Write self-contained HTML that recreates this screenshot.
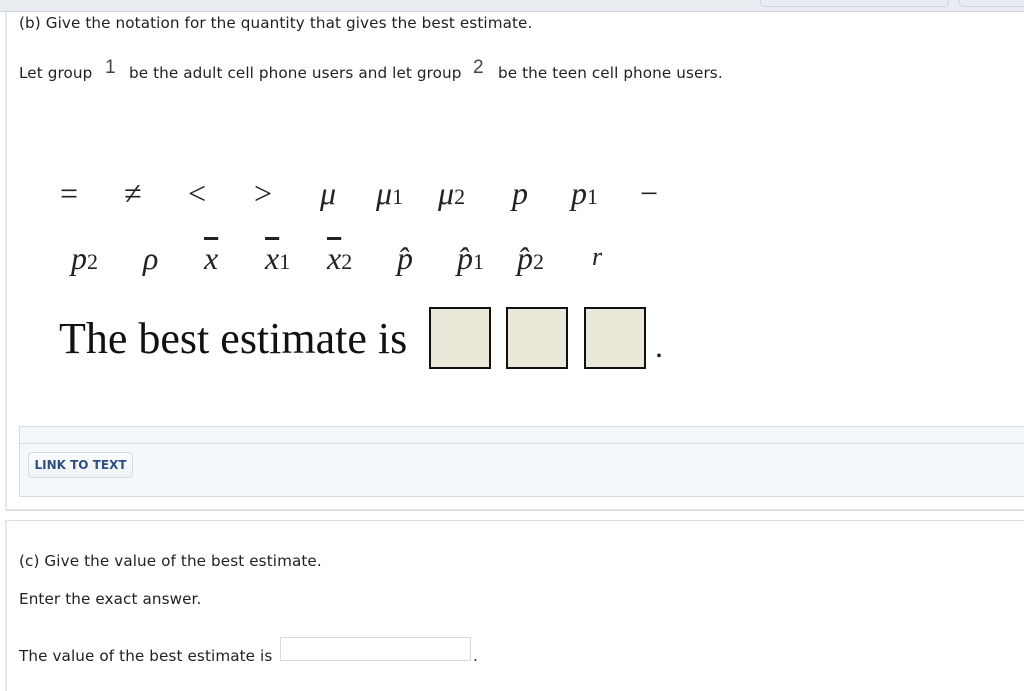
<!DOCTYPE html>
<html><head><meta charset="utf-8"><style>
body{margin:0;width:1024px;height:681px;background:#fff;position:relative;overflow:hidden;font-family:"DejaVu Sans",sans-serif;color:#222;}
.a{position:absolute;white-space:nowrap;}
.t{font-size:15.2px;letter-spacing:0.1px;}
.m{font-family:"Liberation Serif",serif;font-size:32px;color:#222;}
.i{font-style:italic;}
.s{font-size:22px;font-style:normal;}
.box{position:absolute;top:307px;width:62px;height:62px;background:#ebe8da;border:2px solid #111;box-sizing:border-box;}
</style></head><body>
<div class="a" style="left:0;top:0;width:1024px;height:11px;background:#e9edf2;border-bottom:1px solid #cfd6de"></div>
<div class="a" style="left:760px;top:-4px;width:187px;height:9px;border:1px solid #cfd6de;border-radius:4px;background:#e9edf2"></div>
<div class="a" style="left:959px;top:-4px;width:80px;height:9px;border:1px solid #cfd6de;border-radius:4px;background:#e9edf2"></div>
<div class="a" style="left:5px;top:12px;width:1030px;height:497px;border-left:2px solid #e4e9ef;border-bottom:2px solid #d8dfe7"></div>
<div class="a t" style="left:19px;top:14px">(b) Give the notation for the quantity that gives the best estimate.</div>
<div class="a t" style="left:19px;top:64px">Let group</div>
<div class="a" style="left:105px;top:57px;font-size:19px;font-family:'Liberation Sans';color:#444">1</div>
<div class="a t" style="left:129px;top:64px">be the adult cell phone users and let group</div>
<div class="a" style="left:473px;top:57px;font-size:19px;font-family:'Liberation Sans';color:#444">2</div>
<div class="a t" style="left:498px;top:64px">be the teen cell phone users.</div>
<div class="a m" style="left:60px;top:175px">=</div>
<div class="a m" style="left:124px;top:175px">≠</div>
<div class="a m" style="left:188px;top:175px">&lt;</div>
<div class="a m" style="left:254px;top:175px">&gt;</div>
<div class="a m i" style="left:320px;top:175px">μ</div>
<div class="a m i" style="left:376px;top:175px">μ<span class="s">1</span></div>
<div class="a m i" style="left:438px;top:175px">μ<span class="s">2</span></div>
<div class="a m i" style="left:512px;top:175px">p</div>
<div class="a m i" style="left:571px;top:175px">p<span class="s">1</span></div>
<div class="a m" style="left:640px;top:175px">−</div>
<div class="a m i" style="left:71px;top:240px">p<span class="s">2</span></div>
<div class="a m i" style="left:143px;top:240px">ρ</div>
<div class="a m i" style="left:204px;top:240px;text-decoration:overline">x</div>
<div class="a m i" style="left:265px;top:240px"><span style="text-decoration:overline">x</span><span class="s">1</span></div>
<div class="a m i" style="left:327px;top:240px"><span style="text-decoration:overline">x</span><span class="s">2</span></div>
<div class="a m i" style="left:397px;top:240px">p̂</div>
<div class="a m i" style="left:457px;top:240px">p̂<span class="s">1</span></div>
<div class="a m i" style="left:517px;top:240px">p̂<span class="s">2</span></div>
<div class="a m i" style="left:592px;top:242px;font-size:26px">r</div>
<div class="a m" style="left:59px;top:313px;font-size:44px;color:#111">The best estimate is</div>
<div class="box" style="left:429px"></div>
<div class="box" style="left:506px"></div>
<div class="box" style="left:584px"></div>
<div class="a m" style="left:655px;top:328px">.</div>
<div class="a" style="left:19px;top:426px;width:1010px;height:69px;background:#f5f8fb;border:1px solid #d3dbe4;border-right:none"></div>
<div class="a" style="left:20px;top:443px;width:1010px;height:1px;background:#d3dbe4"></div>
<div class="a" style="left:28px;top:452px;width:103px;height:24px;border:1px solid #d3dbe4;border-radius:4px;background:linear-gradient(#fbfcfd,#eef2f6);font-size:12px;font-weight:bold;color:#2d4f84;line-height:24px;text-align:center">LINK TO TEXT</div>
<div class="a" style="left:5px;top:520px;width:1030px;height:170px;border-left:2px solid #e4e9ef;border-top:1px solid #d8dfe7"></div>
<div class="a t" style="left:19px;top:552px">(c) Give the value of the best estimate.</div>
<div class="a t" style="left:19px;top:590px">Enter the exact answer.</div>
<div class="a t" style="left:19px;top:647px">The value of the best estimate is</div>
<div class="a" style="left:280px;top:637px;width:191px;height:24px;border:1px solid #d6dbe0;box-sizing:border-box"></div>
<div class="a t" style="left:473px;top:647px">.</div>
</body></html>
